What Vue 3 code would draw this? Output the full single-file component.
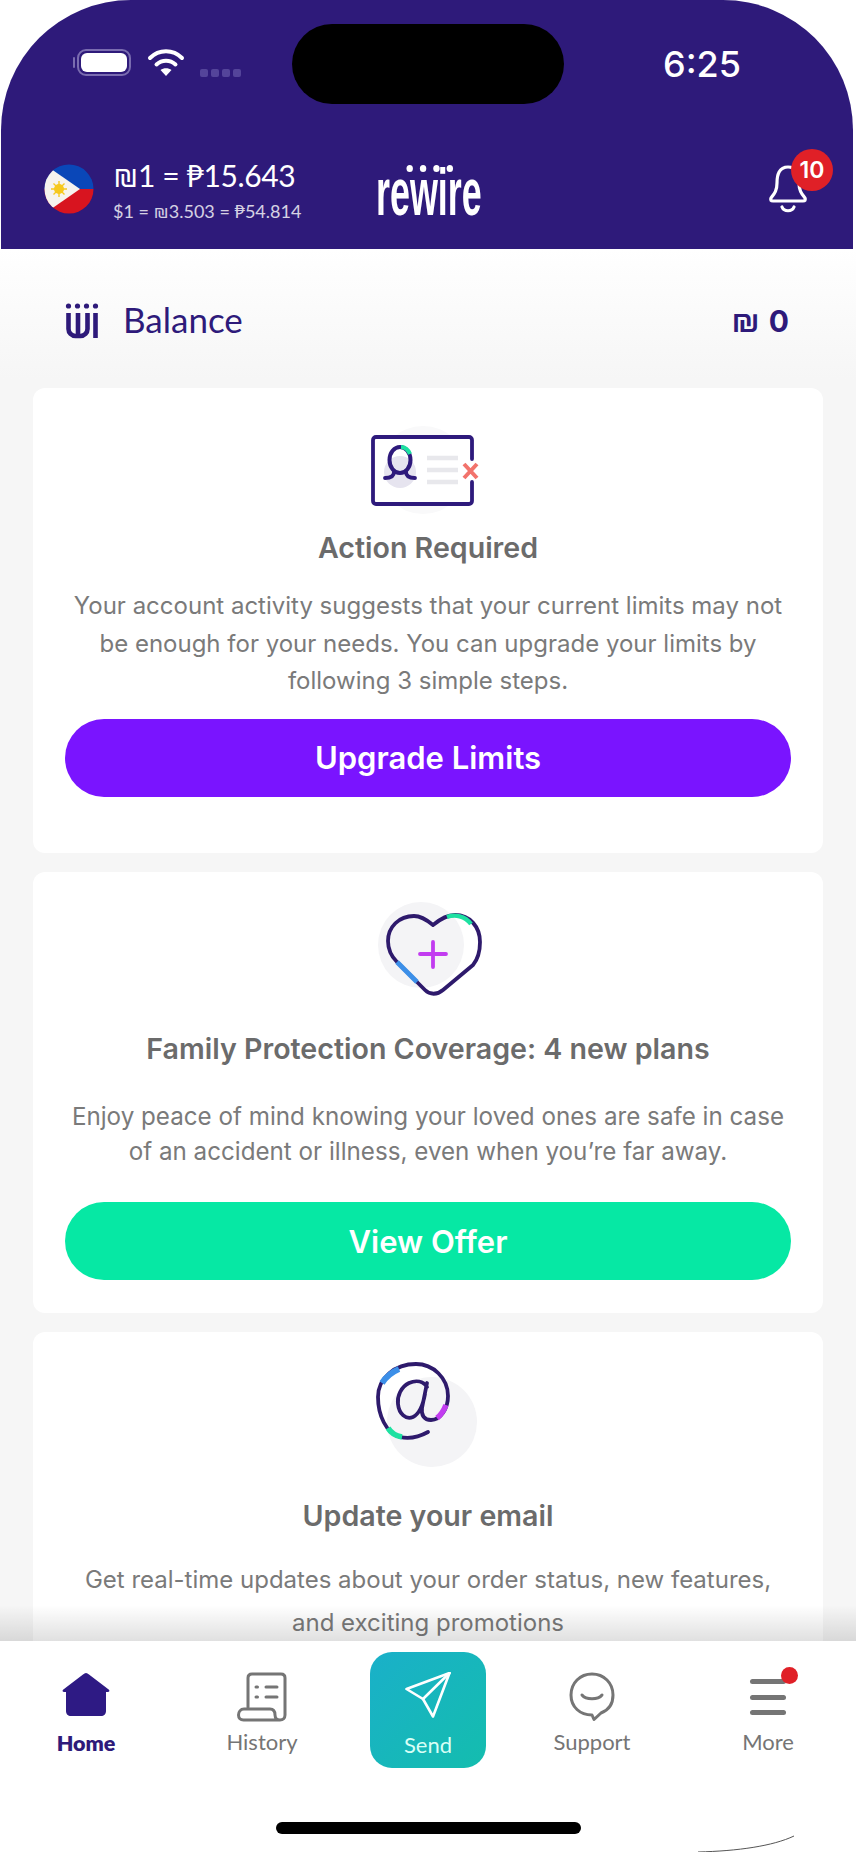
<script setup>
const tabs = [
  { key: 'home', label: 'Home', active: true },
  { key: 'history', label: 'History' },
  { key: 'send', label: 'Send' },
  { key: 'support', label: 'Support' },
  { key: 'more', label: 'More' }
]
</script>

<template>
  <div class="phone">
    <header class="top">
      <div class="status">
        <div class="battery"><span class="battery-fill"></span></div>
        <svg class="wifi" width="38" height="28" viewBox="0 0 38 28" fill="none" stroke="#fff" stroke-width="4" stroke-linecap="round">
          <path d="M3 9 C12 0 26 0 35 9"/>
          <path d="M9.500 15.500 C15 10.500 23 10.500 28.500 15.500"/>
          <path d="M13.500 21 C16.500 18.500 21.500 18.500 24.500 21 L19 27 Z" fill="#fff" stroke="none"/>
        </svg>
        <div class="dots"><i></i><i></i><i></i><i></i></div>
        <div class="island"></div>
        <div class="clock">6:25</div>
      </div>
      <div class="bar">
        <div class="rates">
          <svg class="flag" width="50" height="50" viewBox="0 0 50 50">
            <defs><clipPath id="fc"><circle cx="25" cy="25" r="24.500"/></clipPath></defs>
            <g clip-path="url(#fc)">
              <rect width="50" height="25" fill="#0a47b8"/>
              <rect y="25" width="50" height="25" fill="#d8141f"/>
              <path d="M0 0 L36 25 L0 50 Z" fill="#f6f3ee"/>
              <circle cx="15" cy="25" r="5" fill="#f6c81e"/>
              <path d="M15 17v16M7 25h16M9.500 19.500l11 11M20.500 19.500l-11 11" stroke="#f6c81e" stroke-width="1.400"/>
            </g>
          </svg>
          <div class="rate-text">
            <div class="rate-main">₪1 = ₱15.643</div>
            <div class="rate-sub">$1 = ₪3.503 = ₱54.814</div>
          </div>
        </div>
        <div class="logo"><span class="logo-dots"><i></i><i></i><i></i><i></i></span>rewire</div>
        <div class="bell">
          <svg width="40" height="54" viewBox="0 0 40 54" fill="none" stroke="#fff" stroke-width="3.200" stroke-linecap="round" stroke-linejoin="round">
            <path d="M20 5 C11 5 9 13 9 21 C9 29 6 32 3 36 C2 38 3 39 5 39 H35 C37 39 38 38 37 36 C34 32 31 29 31 21 C31 13 29 5 20 5 Z"/>
            <path d="M14 45 C16 50 24 50 26 45"/>
          </svg>
          <span class="badge">10</span>
        </div>
      </div>
    </header>

    <main class="content">
      <div class="balance">
        <div class="balance-left">
          <svg class="wi" width="34" height="38" viewBox="0 0 34 38" fill="none" stroke="#2e1a7a" stroke-width="4.600">
            <path d="M3.500 11 V27 a7 7 0 0 0 7 7 h5 a7 7 0 0 0 7 -7 V11 M13 11 V34 M30.500 11 V36"/>
            <g fill="#2e1a7a" stroke="none">
              <circle cx="3.500" cy="4" r="2.600"/><circle cx="12.500" cy="4" r="2.600"/><circle cx="21.500" cy="4" r="2.600"/><circle cx="30.500" cy="4" r="2.600"/>
            </g>
          </svg>
          <span class="balance-label">Balance</span>
        </div>
        <div class="balance-val"><span class="shekel">₪</span> 0</div>
      </div>

      <section class="card card-1">
        <svg class="ico" width="124" height="102" viewBox="0 0 124 102" fill="none">
          <circle cx="57" cy="47" r="44" fill="#f9f9fa"/>
          <rect x="9" y="15" width="96" height="65" fill="#fff"/>
          <circle cx="34" cy="49" r="16" fill="#e6e4ef"/>
          <path d="M106 36 V17 a3 3 0 0 0 -3 -3 H10 a3 3 0 0 0 -3 3 V78 a3 3 0 0 0 3 3 H103 a3 3 0 0 0 3 -3 V59" stroke="#2e1a7c" stroke-width="3.800" stroke-linecap="round"/>
          <ellipse cx="34" cy="37" rx="10.500" ry="13" stroke="#2e1a7c" stroke-width="4"/>
          <path d="M35 24 A10.500 13 0 0 1 44 31" stroke="#1de1a1" stroke-width="4.200"/>
          <path d="M19 55 C25 55 28 53 28 49 M49 55 C43 55 40 53 40 49" stroke="#2e1a7c" stroke-width="3.800" stroke-linecap="round"/>
          <path d="M61 35 H92 M61 47 H92 M61 59 H92" stroke="#e8e8ec" stroke-width="4.500"/>
          <path d="M98 41 L111 55 M111 41 L98 55" stroke="#f2736c" stroke-width="4"/>
        </svg>
        <h2 class="h-1">Action Required</h2>
        <p class="text t1">Your account activity suggests that your current limits may not be enough for your needs. You can upgrade your limits by following 3 simple steps.</p>
        <button class="btn purple">Upgrade Limits</button>
      </section>

      <section class="card card-2">
        <svg class="ico" width="110" height="100" viewBox="0 0 110 100" fill="none">
          <circle cx="48" cy="45" r="43" fill="#f4f4f6"/>
          <path d="M60 25 C54 20 48 16 41 16 C26 16 15 27 15 41 C15 50 19 57 24 62 L52 90 C57 95 64 95 70 90 L100 65 C105 59 107 50 107 42 C107 27 97 15 82 15 C73 15 66 20 60 25 Z" stroke="#2e1a6c" stroke-width="3.800" stroke-linecap="round" stroke-linejoin="round"/>
          <path d="M74 17 C82 14 92 16 98 24" stroke="#1de1a1" stroke-width="4.400"/>
          <path d="M24 62 L44 82" stroke="#3c8fe8" stroke-width="4.800"/>
          <path d="M60 42 V67 M47 54 H73" stroke="#c23cf0" stroke-width="3.800" stroke-linecap="round"/>
        </svg>
        <h2 class="h-2">Family Protection Coverage: 4 new plans</h2>
        <p class="text t2">Enjoy peace of mind knowing your loved ones are safe in case of an accident or illness, even when you’re far away.</p>
        <button class="btn green">View Offer</button>
      </section>

      <section class="card card-3">
        <svg class="ico" width="110" height="120" viewBox="0 0 110 120" fill="none">
          <circle cx="59" cy="72" r="45" fill="#f4f4f6"/>
          <path d="M55 82 C46 87 36 89 27 87 C13 83 5 65 5 47 C5 28 22 14 43 14 C60 14 75 28 75 46 C75 58 68 70 58 70 C51 70 48 65 49 58 L54 33 M54 37 C50 31 43 30 36 33 C28 37 24 46 25 54 C26 64 33 70 40 67 C46 64 50 55 52 44" stroke="#2e1a6c" stroke-width="3.800" stroke-linecap="round" stroke-linejoin="round"/>
          <path d="M9 33 C13 27 19 22 26 19" stroke="#3c8fe8" stroke-width="6"/>
          <path d="M15 78 C18 83 23 86 29 87" stroke="#1de1a1" stroke-width="5.500"/>
          <path d="M73 55 C71 60 68 65 64 68" stroke="#c23cf0" stroke-width="5.500"/>
        </svg>
        <h2 class="h-3">Update your email</h2>
        <p class="text t3">Get real-time updates about your order status, new features, and exciting promotions</p>
      </section>
    </main>

    <nav class="tabs">
      <div class="tab-row">
        <div v-for="t in tabs" :key="t.key" class="tab" :class="[t.key, { active: t.active }]">
          <svg v-if="t.key === 'home'" width="50" height="46" viewBox="0 0 50 46">
            <path d="M25 1 C26 1 27 1.500 28 2.500 L47 17 C49 18.500 49 20 46 20 H45 V39 C45 42 43 44 40 44 H10 C7 44 5 42 5 39 V20 H4 C1 20 1 18.500 3 17 L22 2.500 C23 1.500 24 1 25 1 Z" fill="#2e1a84"/>
          </svg>
          <svg v-else-if="t.key === 'history'" width="50" height="50" viewBox="0 0 50 50" fill="none" stroke="#757575" stroke-width="3" stroke-linecap="round" stroke-linejoin="round">
            <path d="M11 35 V6 C11 3.500 12.500 2 15 2 H44 C46.500 2 48 3.500 48 6 V43 C48 46 46 48 43 48 C40 48 38 46 38 43 C38 39 36 37 33 37 H7 C3.500 37 1.500 40 1.500 43 C1.500 46 3.500 48 6.500 48 H43"/>
            <path d="M19 15h1.500M19 25h1.500M29 15h11M29 25h11"/>
          </svg>
          <svg v-else-if="t.key === 'send'" width="46" height="46" viewBox="0 0 46 46" fill="none" stroke="#fff" stroke-width="2.600" stroke-linejoin="round" stroke-linecap="round">
            <path d="M44.500 1 L1.500 17 L18 27 L28 44.500 Z"/>
            <path d="M44.500 1 L18 27"/>
          </svg>
          <svg v-else-if="t.key === 'support'" width="46" height="50" viewBox="0 0 46 50" fill="none" stroke="#757575" stroke-width="3" stroke-linecap="round" stroke-linejoin="round">
            <path d="M23 2 C11 2 2 11 2 23 C2 35 11 43 23 43 L25 47.500 L32 41 C40 38 44 31 44 23 C44 11 35 2 23 2 Z"/>
            <path d="M13 23 C17 28 29 28 33 23"/>
          </svg>
          <div v-else class="menu"><i></i><i></i><i></i><b></b></div>
          <span class="tab-label">{{ t.label }}</span>
        </div>
      </div>
      <div class="home-bar"></div>
    </nav>
    <svg class="edge" width="160" height="24" viewBox="0 0 160 24" fill="none">
      <path d="M0 23 C40 22 75 17 96 7" stroke="#555" stroke-width="1"/>
    </svg>
  </div>
</template>

<style>
html, body { margin: 0; background: #fff; }
</style>

<style scoped>
.phone {
  width: 856px;
  height: 1852px;
  position: relative;
  overflow: hidden;
  background: #fff;
  display: flex;
  flex-direction: column;
  font-family: "Inter", "Liberation Sans", sans-serif;
}
.top {
  width: 852px;
  height: 249px;
  flex: none;
  background: #2e1a7a;
  border-radius: 130px 130px 0 0;
  margin-left: 1px;
  color: #fff;
  display: flex;
  flex-direction: column;
}
.status {
  height: 104px;
  flex: none;
  position: relative;
  display: flex;
  align-items: flex-start;
  padding: 0 112px 0 76px;
  box-sizing: border-box;
}
.battery {
  position: relative;
  width: 54px;
  height: 27px;
  margin-top: 49px;
  border: 2px solid #7a6cb0;
  border-radius: 9px;
  box-sizing: border-box;
  padding: 2px;
  display: flex;
}
.battery::before {
  content: "";
  position: absolute;
  left: -6px;
  top: 6px;
  width: 2px;
  height: 11px;
  background: #7a6cb0;
  border-radius: 2px;
}
.battery-fill { flex: 1; background: #fff; border-radius: 6px; }
.wifi { margin: 49px 0 0 16px; flex: none; }
.dots { display: flex; gap: 3px; margin: 69px 0 0 15px; }
.dots i { width: 8px; height: 8px; background: #54449a; border-radius: 2px; }
.island {
  position: absolute;
  left: 291px;
  top: 24px;
  width: 272px;
  height: 80px;
  background: #000;
  border-radius: 40px;
}
.clock {
  margin: 42px 0 0 auto;
  font-size: 36px;
  line-height: 44px;
  font-weight: 500;
}
.bar {
  flex: 1;
  display: flex;
  align-items: flex-start;
  padding-left: 43px;
}
.rates { display: flex; align-items: flex-start; gap: 19px; width: 332px; flex: none; }
.flag { margin-top: 60px; flex: none; }
.rate-text { font-family: "Lato", sans-serif; margin-top: 53px; }
.rate-main { font-size: 30px; line-height: 36px; font-weight: 400; letter-spacing: -.4px; white-space: nowrap; }
.rate-sub { font-size: 18px; line-height: 22px; opacity: .8; white-space: nowrap; margin-top: 7px; }
.logo {
  position: relative;
  margin-top: 54px;
  font-family: "Liberation Sans", sans-serif;
  font-size: 67px;
  font-weight: 700;
  line-height: 67px;
  transform: scaleX(.535);
  transform-origin: left top;
  flex: none;
}
.logo-dots { position: absolute; left: 57px; top: 7px; display: flex; gap: 13px; }
.logo-dots i { width: 12px; height: 7px; border-radius: 50%; background: #fff; }
.bell { position: relative; margin: 58px 45px 0 auto; height: 54px; }
.badge {
  position: absolute;
  left: 23px;
  top: -13px;
  width: 42px;
  height: 42px;
  background: #e02027;
  border-radius: 50%;
  font-size: 23px;
  font-weight: 600;
  display: flex;
  align-items: center;
  justify-content: center;
}
.content {
  height: 1392px;
  flex: none;
  overflow: hidden;
  background: linear-gradient(#fff 0, #f6f6f6 130px);
  padding: 0 33px;
  box-sizing: border-box;
}
.balance {
  height: 139px;
  padding: 0 34px 0 32px;
  display: flex;
  align-items: center;
  justify-content: space-between;
  color: #2e1a7a;
}
.balance-left { display: flex; align-items: center; gap: 24px; }
.wi { flex: none; margin-top: 4px; }
.balance-label { font-family: "Lato", sans-serif; font-size: 35px; font-weight: 400; }
.balance-val { font-size: 30px; font-weight: 700; margin-top: 2px; }
.shekel { font-weight: 500; font-size: 33px; margin-right: 2px; }
.card {
  background: #fff;
  border-radius: 12px;
  display: flex;
  flex-direction: column;
  align-items: center;
  padding: 0 32px;
  box-sizing: border-box;
  margin-bottom: 19px;
}
.card-1 { height: 465px; padding-top: 35px; }
.card-2 { height: 441px; padding-top: 28px; }
.card-3 { height: 400px; padding-top: 18px; }
.ico { flex: none; display: block; }
h2 {
  margin: 0;
  font-size: 28.600px;
  line-height: 36px;
  font-weight: 600;
  color: #6b6b6b;
  text-align: center;
}
.h-1 { margin-top: 5px; }
.h-2 { margin-top: 31px; }
.h-3 { margin-top: 28px; }
.text {
  margin: 0;
  width: 100%;
  text-align: center;
  font-size: 24px;
  color: #7a7a7a;
  font-weight: 400;
}
.t1 { margin-top: 21px; line-height: 37.500px; }
.t2 { margin-top: 33px; line-height: 34.500px; font-size: 24.200px; }
.t3 { margin-top: 24px; line-height: 43px; width: 700px; }
.btn {
  width: 100%;
  height: 78px;
  border: 0;
  border-radius: 39px;
  color: #fff;
  font-family: inherit;
  font-size: 31px;
  font-weight: 600;
  flex: none;
  padding: 0;
}
.purple { background: #7a14ff; margin-top: 19px; }
.green { background: #06e8a4; margin-top: 33px; }
.tabs {
  position: relative;
  height: 211px;
  flex: none;
  background: #fff;
  display: flex;
  flex-direction: column;
}
.tabs::before {
  content: "";
  position: absolute;
  left: 0;
  right: 0;
  top: -36px;
  height: 36px;
  background: linear-gradient(rgba(0,0,0,0), rgba(0,0,0,.12));
}
.tab-row { display: flex; height: 182px; flex: none; }
.tab {
  width: 176px;
  flex: none;
  display: flex;
  flex-direction: column;
  align-items: center;
  color: #757575;
  font-family: "Lato", sans-serif;
  font-size: 22px;
  padding-top: 31px;
  box-sizing: border-box;
}
.tab.home { width: 172px; font-size: 21.500px; }
.tab.history { width: 180px; }
.tab.active { color: #2e1a7a; font-weight: 800; }
.tab-label { margin-top: 12px; line-height: 26px; }
.tab svg { flex: none; }
.tab.history .tab-label, .tab.support .tab-label { margin-top: 7px; }
.tab.more .tab-label { margin-top: 11px; }
.tab.send {
  width: 116px;
  height: 116px;
  margin: 11px 18px 0;
  padding-top: 20px;
  border-radius: 22px;
  background: linear-gradient(135deg, #1ab0c9, #14bdae);
  color: #d8fff6;
}
.tab.send .tab-label { margin-top: 14px; }
.menu {
  width: 36px;
  height: 46px;
  position: relative;
  display: flex;
  flex-direction: column;
  justify-content: flex-end;
  gap: 10.500px;
  padding-bottom: 3px;
  box-sizing: border-box;
}
.menu i { display: block; height: 5px; background: #757575; border-radius: 3px; }
.menu b { position: absolute; right: -12px; top: -5px; width: 17px; height: 17px; border-radius: 50%; background: #e02027; }
.home-bar {
  width: 305px;
  height: 12px;
  background: #000;
  border-radius: 6px;
  margin: -1px auto 0;
}
.edge { position: absolute; left: 698px; top: 1829px; }
</style>
